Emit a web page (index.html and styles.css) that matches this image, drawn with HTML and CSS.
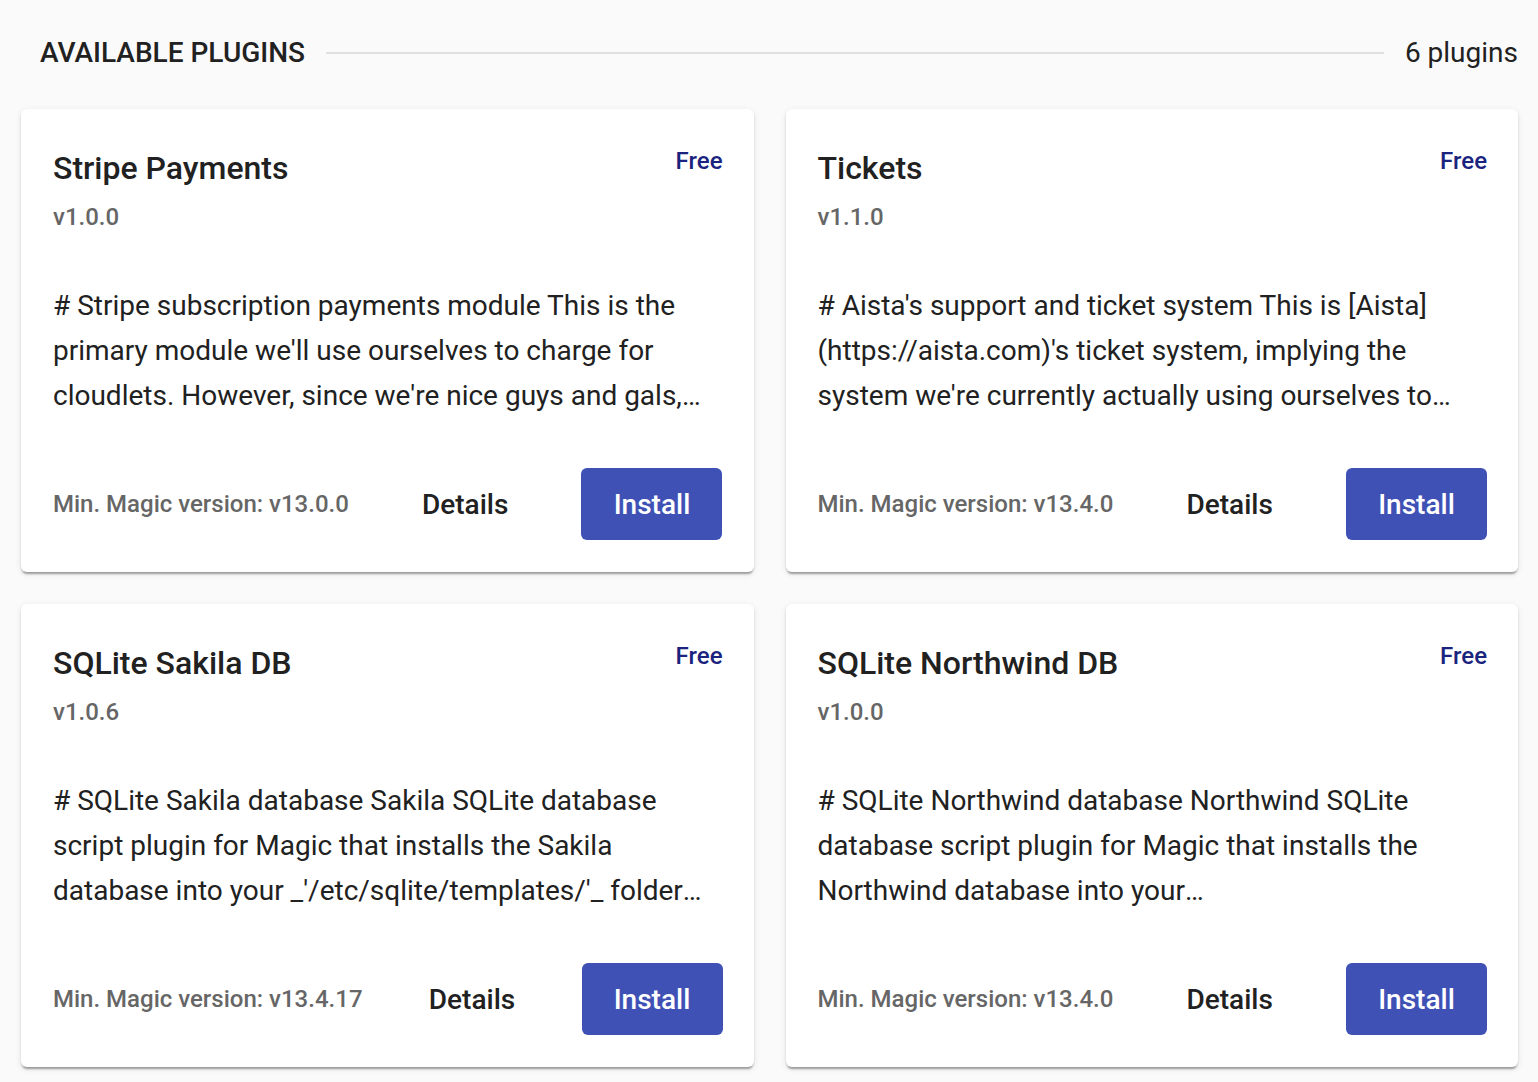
FILE: index.html
```html
<!DOCTYPE html>
<html lang="en">
<head>
<meta charset="utf-8">
<title>Available plugins</title>
<link rel="stylesheet" href="styles.css">
</head>
<body>
<main class="page">
  <header class="section-head">
    <h2 class="section-title">AVAILABLE PLUGINS</h2>
    <div class="section-rule"></div>
    <span class="section-count">6 plugins</span>
  </header>
  <div class="grid">
    <article class="card">
      <div class="card-head">
        <div class="card-titles">
          <h3 class="card-title">Stripe Payments</h3>
          <div class="card-version">v1.0.0</div>
        </div>
        <span class="price">Free</span>
      </div>
      <p class="card-desc"># Stripe subscription payments module This is the primary module we'll use ourselves to charge for cloudlets. However, since we're nice guys and gals, we've decided to release it as open source for everybody to use in their own apps.</p>
      <div class="card-foot">
        <span class="min-version">Min. Magic version: v13.0.0</span>
        <button class="btn-text">Details</button>
        <button class="btn-primary">Install</button>
      </div>
    </article>
    <article class="card">
      <div class="card-head">
        <div class="card-titles">
          <h3 class="card-title">Tickets</h3>
          <div class="card-version">v1.1.0</div>
        </div>
        <span class="price">Free</span>
      </div>
      <p class="card-desc"># Aista's support and ticket system This is [Aista](https://aista.com)'s ticket system, implying the system we're currently actually using ourselves to handle support requests from our clients.</p>
      <div class="card-foot">
        <span class="min-version">Min. Magic version: v13.4.0</span>
        <button class="btn-text">Details</button>
        <button class="btn-primary">Install</button>
      </div>
    </article>
    <article class="card">
      <div class="card-head">
        <div class="card-titles">
          <h3 class="card-title">SQLite Sakila DB</h3>
          <div class="card-version">v1.0.6</div>
        </div>
        <span class="price">Free</span>
      </div>
      <p class="card-desc"># SQLite Sakila database Sakila SQLite database script plugin for Magic that installs the Sakila database into your _'/etc/sqlite/templates/'_ folder allowing you to use it as a template.</p>
      <div class="card-foot">
        <span class="min-version">Min. Magic version: v13.4.17</span>
        <button class="btn-text">Details</button>
        <button class="btn-primary">Install</button>
      </div>
    </article>
    <article class="card">
      <div class="card-head">
        <div class="card-titles">
          <h3 class="card-title">SQLite Northwind DB</h3>
          <div class="card-version">v1.0.0</div>
        </div>
        <span class="price">Free</span>
      </div>
      <p class="card-desc"># SQLite Northwind database Northwind SQLite database script plugin for Magic that installs the Northwind database into your _'/etc/sqlite/templates/'_ folder allowing you to use it as a template.</p>
      <div class="card-foot">
        <span class="min-version">Min. Magic version: v13.4.0</span>
        <button class="btn-text">Details</button>
        <button class="btn-primary">Install</button>
      </div>
    </article>
  </div>
</main>
</body>
</html>
```
FILE: styles.css
```css
* { box-sizing: border-box; }
html, body { margin: 0; padding: 0; }
body {
  background: #fafafa;
  font-family: Roboto, "Liberation Sans", sans-serif;
  color: #212121;
}
.page {
  padding: 0 20px 40px 21px;
}
.section-head {
  display: flex;
  align-items: center;
  gap: 21px;
  margin-top: 33px;
  height: 40px;
  padding-left: 19px;
}
.section-title {
  margin: 0;
  font-size: 28px;
  font-weight: 500;
  line-height: 40px;
  color: #212121;
  white-space: nowrap;
}
.section-rule {
  flex: 1;
  height: 2px;
  background: #e0e0e0;
}
.section-count {
  font-size: 28px;
  line-height: 40px;
  font-weight: 400;
  color: #212121;
  white-space: nowrap;
}
.grid {
  display: grid;
  grid-template-columns: 1fr 1fr;
  column-gap: 32px;
  row-gap: 32px;
  margin-top: 36px;
}
.card {
  background: #fff;
  border-radius: 6px;
  padding: 32px 31px 32px 32px;
  box-shadow: 0 4px 2px -2px rgba(0,0,0,.22), 0 2px 2px 0 rgba(0,0,0,.14), 0 2px 6px 0 rgba(0,0,0,.10);
}
.card-head {
  display: flex;
  justify-content: space-between;
  align-items: flex-start;
}
.card-title {
  margin: 7px 0 0 0;
  font-size: 32px;
  line-height: 40px;
  font-weight: 500;
  color: #212121;
}
.card-version {
  margin-top: 13px;
  font-size: 24px;
  line-height: 32px;
  font-weight: 500;
  color: #666;
}
.price {
  font-size: 24px;
  line-height: 40px;
  font-weight: 500;
  color: #1a237e;
}
.card-desc {
  margin: 50px 0 0 0;
  font-size: 28px;
  line-height: 45px;
  color: #212121;
  height: 135px;
  display: -webkit-box;
  -webkit-line-clamp: 3;
  -webkit-box-orient: vertical;
  overflow: hidden;
}
.card-foot {
  margin-top: 50px;
  display: flex;
  align-items: center;
  justify-content: space-between;
}
.min-version {
  font-size: 24px;
  font-weight: 500;
  color: #666;
}
.btn-text {
  border: none;
  background: none;
  padding: 0;
  font-family: inherit;
  font-size: 28px;
  font-weight: 500;
  color: #212121;
}
.btn-primary {
  border: none;
  background: #3f51b5;
  color: #fff;
  font-family: inherit;
  font-size: 28px;
  font-weight: 500;
  width: 141px;
  height: 72px;
  border-radius: 6px;
  padding: 0;
}
```
